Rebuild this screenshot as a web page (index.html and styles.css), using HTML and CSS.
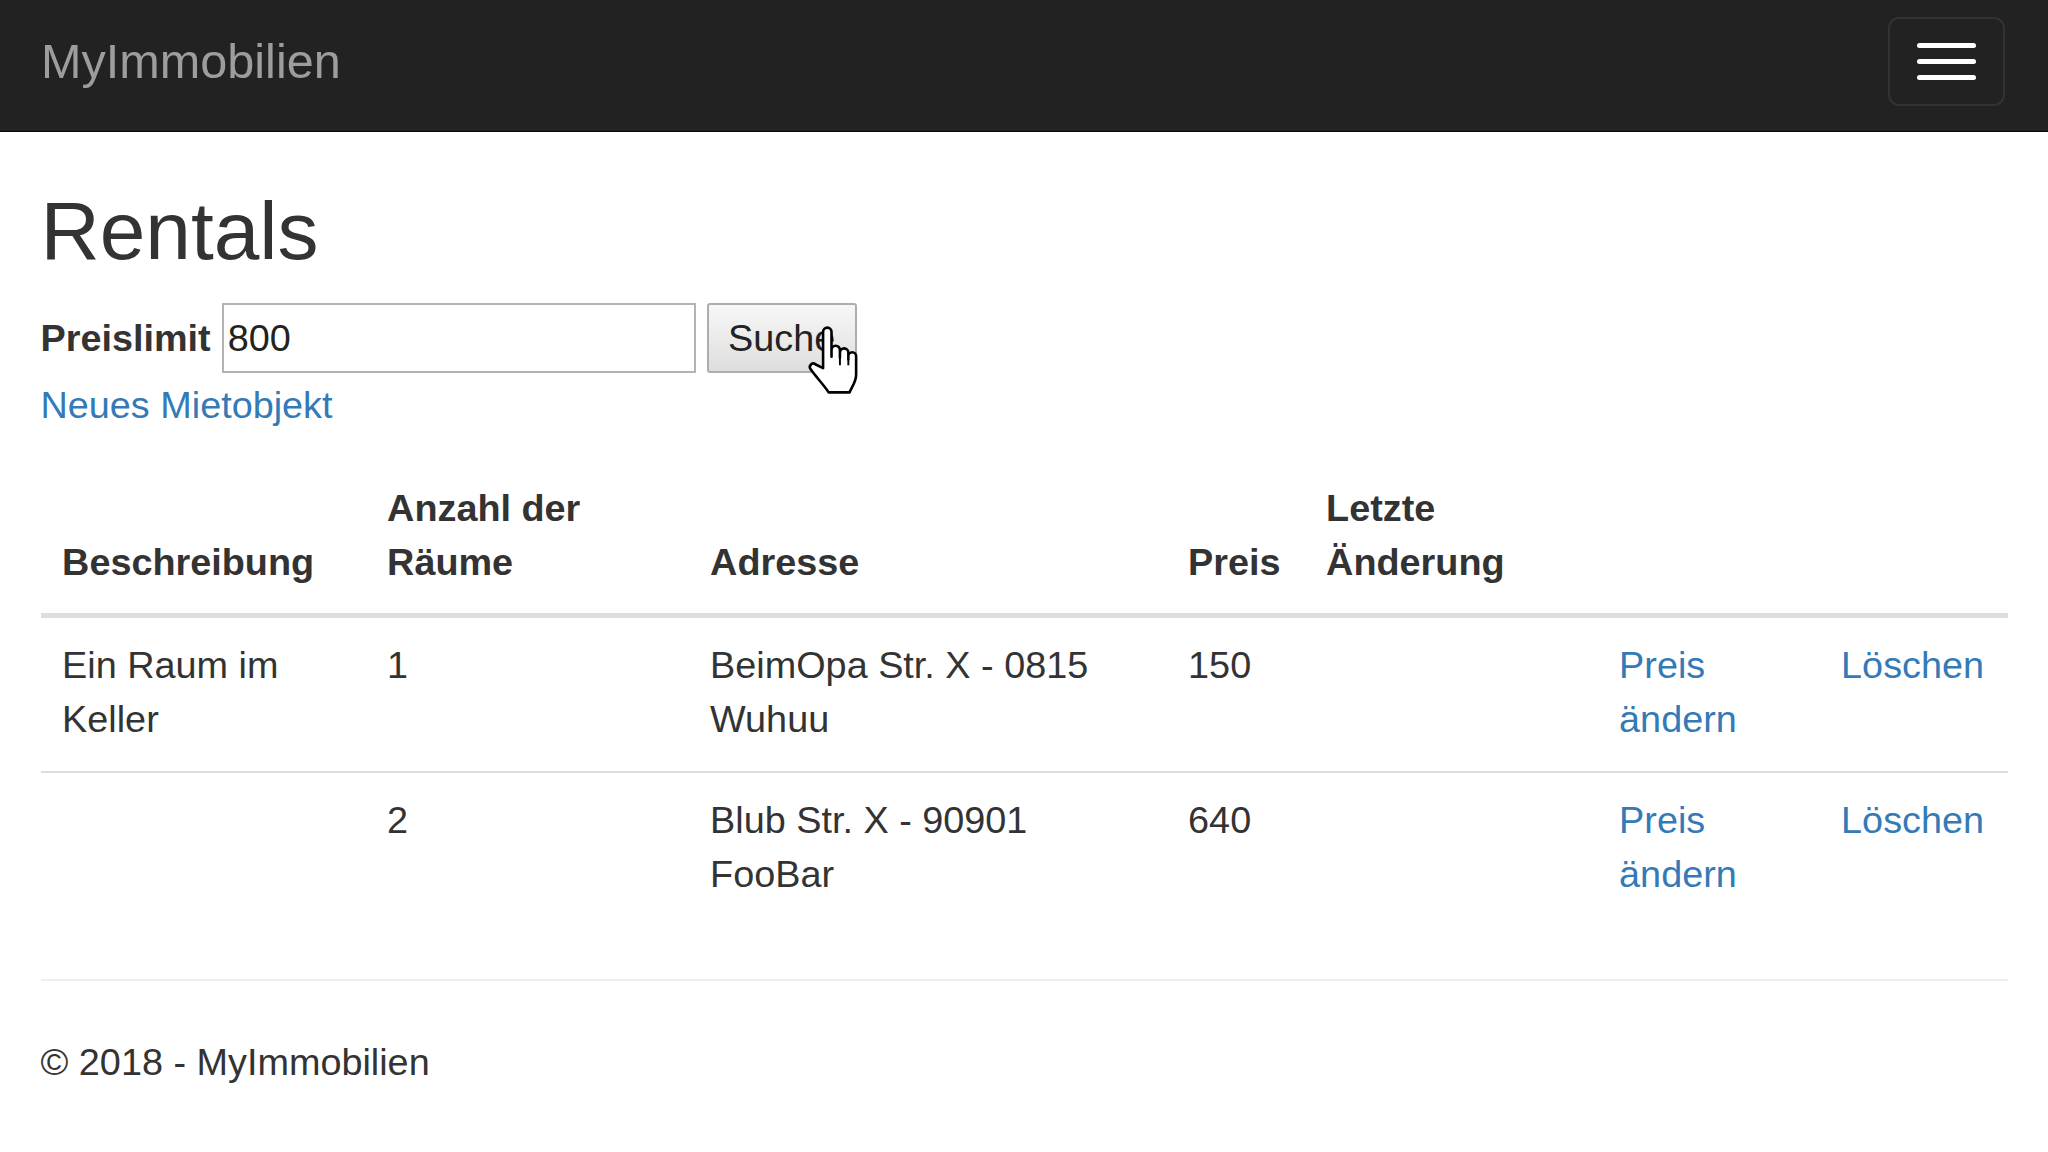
FILE: index.html
```html
<!DOCTYPE html>
<html lang="de">
<head>
  <meta charset="UTF-8">
  <meta name="viewport" content="width=device-width, initial-scale=1.0">
  <title>Rentals - MyImmobilien</title>
  <link rel="stylesheet" href="styles.css">
</head>
<body>

  <div class="navbar">
    <a class="navbar-brand" href="#">MyImmobilien</a>
    <button class="navbar-toggle" type="button">
      <span class="icon-bar"></span>
      <span class="icon-bar"></span>
      <span class="icon-bar"></span>
    </button>
  </div>

  <div class="body-content">
    <h2>Rentals</h2>

    <form class="search-form">
      <label for="price-limit">Preislimit</label>
      <input type="text" id="price-limit" value="800">
      <button type="button" class="search-btn">Suche</button>

      <!-- mouse pointer from the screenshot -->
      <svg class="hand-cursor" viewBox="1.5 0.5 15.5 21" width="52" height="68">
        <path d="M6.5 13.5 V2.3 a1.3 1.3 0 0 1 2.6 0 V10 V7.9 a1.3 1.3 0 0 1 2.6 0 V10.3 V8.7 a1.3 1.3 0 0 1 2.6 0 V10.8 V9.8 a1.2 1.2 0 0 1 2.4 0 V15.5 c0 2.5 -1.5 4 -2 5.5 H8.2 C7 19 4.5 16.5 2.6 13.8 c-0.7 -1 0.6 -2.3 1.6 -1.4 Z"
              fill="#fff" stroke="#000" stroke-width="0.8" stroke-linejoin="round"/>
        <path d="M11.7 10.3 V12.6 M14.3 10.8 V12.6" stroke="#000" stroke-width="0.6" fill="none"/>
      </svg>
    </form>

    <p class="new-link"><a href="#">Neues Mietobjekt</a></p>

    <table class="table">
      <colgroup>
        <col style="width: 325px">
        <col style="width: 323px">
        <col style="width: 478px">
        <col style="width: 138px">
        <col style="width: 293px">
        <col style="width: 222px">
        <col style="width: 188px">
      </colgroup>
      <thead>
        <tr>
          <th>Beschreibung</th>
          <th>Anzahl der Räume</th>
          <th>Adresse</th>
          <th>Preis</th>
          <th>Letzte Änderung</th>
          <th></th>
          <th></th>
        </tr>
      </thead>
      <tbody>
        <tr>
          <td>Ein Raum im Keller</td>
          <td>1</td>
          <td>BeimOpa Str. X - 0815 Wuhuu</td>
          <td>150</td>
          <td></td>
          <td><a href="#">Preis ändern</a></td>
          <td class="nowrap"><a href="#">Löschen</a></td>
        </tr>
        <tr>
          <td></td>
          <td>2</td>
          <td>Blub Str. X - 90901 FooBar</td>
          <td>640</td>
          <td></td>
          <td><a href="#">Preis ändern</a></td>
          <td class="nowrap"><a href="#">Löschen</a></td>
        </tr>
      </tbody>
    </table>

    <hr>
    <footer>
      <p>&copy; 2018 - MyImmobilien</p>
    </footer>
  </div>

</body>
</html>
```

FILE: styles.css
```css
body {
  margin: 0;
  font-family: "Liberation Sans", Arial, sans-serif;
  font-size: 37.8px;
  line-height: 54px;
  color: #333;
  background-color: #fff;
}
a {
  color: #337ab7;
  text-decoration: none;
}
.navbar {
  display: flex;
  justify-content: space-between;
  align-items: flex-start;
  height: 131px;
  padding: 0 43px 0 41px;
  background-color: #222;
  border-bottom: 1px solid #080808;
}
.navbar-brand {
  padding-top: 34px;
  font-size: 48.6px;
  line-height: 54px;
  color: #9d9d9d;
}
.navbar-toggle {
  display: flex;
  flex-direction: column;
  justify-content: center;
  align-items: center;
  gap: 10.8px;
  box-sizing: border-box;
  width: 117px;
  height: 89px;
  margin-top: 17px;
  padding: 0;
  background: transparent;
  border: 2.7px solid #333;
  border-radius: 11px;
}
.icon-bar {
  display: block;
  width: 59px;
  height: 5.4px;
  background-color: #fff;
  border-radius: 3px;
}
.body-content {
  padding: 0 40.5px;
}
h2 {
  margin: 54px 0 27px;
  font-size: 82px;
  font-weight: 500;
  line-height: 90px;
}
.search-form {
  position: relative;
  display: flex;
  align-items: center;
  height: 70px;
}
.search-form label {
  font-weight: bold;
  margin-right: 11px;
}
.search-form input {
  box-sizing: border-box;
  width: 474px;
  height: 70px;
  padding: 0 4px;
  font-family: inherit;
  font-size: 37.8px;
  color: #222;
  border: 2px solid #b3b3b3;
  outline: none;
}
.search-btn {
  box-sizing: border-box;
  width: 150px;
  height: 70px;
  margin-left: 11px;
  padding: 0;
  font-family: inherit;
  font-size: 37.8px;
  color: #222;
  background: linear-gradient(#f7f7f7, #dedede);
  border: 2px solid #adadad;
  border-radius: 3px;
}
.hand-cursor {
  position: absolute;
  left: 765px;
  top: 23px;
}
.new-link {
  margin: 5px 0 27px;
}
.table {
  width: 100%;
  table-layout: fixed;
  border-collapse: collapse;
  margin-bottom: 54px;
}
.table th,
.table td {
  padding: 21.6px;
  text-align: left;
}
.table th {
  padding-bottom: 24.6px;
  vertical-align: bottom;
  font-weight: bold;
  border-bottom: 5.4px solid #ddd;
}
.table td {
  padding-top: 20.3px;
  padding-bottom: 24.2px;
  vertical-align: top;
  border-top: 2.7px solid #ddd;
}
.nowrap {
  white-space: nowrap;
}
hr {
  margin: 54px 0;
  border: 0;
  border-top: 2.7px solid #eee;
}
footer p {
  margin: 0;
}
```
